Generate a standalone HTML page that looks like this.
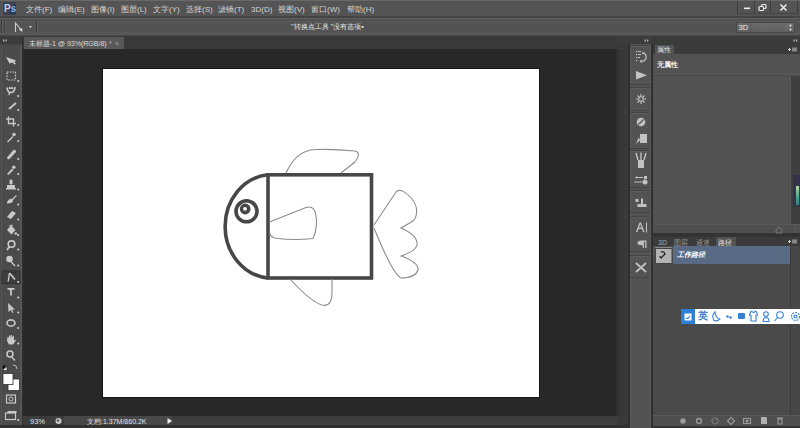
<!DOCTYPE html>
<html><head><meta charset="utf-8">
<style>
*{margin:0;padding:0;box-sizing:border-box}
html,body{width:800px;height:428px;overflow:hidden;background:#535353;font-family:"Liberation Sans",sans-serif;color:#ddd}
.a{position:absolute}
.t{position:absolute;white-space:nowrap;line-height:1}
#menubar{left:0;top:0;width:800px;height:16px;background:#545454;border-top:1px solid #686868}
#optbar{left:0;top:16px;width:800px;height:20px;background:linear-gradient(#444 0,#444 2px,#5e5e5e 2px,#5e5e5e 3px,#535353 3px,#535353 4px,#4e4e4e 4px,#4e4e4e 5px,#5c5c5c 5px,#5c5c5c 6px,#535353 6px,#535353 16px,#585858 16px,#585858 19px,#4a4a4a 19px)}
#topstrip{left:0;top:36px;width:800px;height:8px;background:#3b3b3b}
#tabrow{left:23px;top:37px;width:605px;height:12px;background:#3a3a3a}
#tab{left:24px;top:37px;width:100px;height:12px;background:#585858}
#canvas{left:23px;top:49px;width:594px;height:367px;background:#282828}
#vscroll{left:616px;top:49px;width:12px;height:367px;background:linear-gradient(90deg,#2e2e2e,#363636 30%,#3a3a3a)}
#doc{left:103px;top:69px;width:436px;height:328px;background:#fff;box-shadow:0 0 0 1px #151515}
#toolbar{left:0;top:44px;width:23px;height:384px;background:linear-gradient(90deg,#4b4b4b 0,#4b4b4b 1px,#565656 1px,#565656 2px,#4b4b4b 2px,#4b4b4b 20px,#555 20px,#555 22px,#303030 22px)}
#status{left:23px;top:416px;width:605px;height:12px;background:#3a3a3a;border-top:1px solid #333}
#iconcol{left:628px;top:44px;width:24px;height:384px;background:#535353;border-left:1px solid #3a3a3a;border-right:1px solid #333}
#panel{left:653px;top:44px;width:147px;height:384px;background:#4a4a4a}
.menu .t{top:4.5px;font-size:8px;color:#d4d4d4}
</style></head><body>
<div id="menubar" class="a menu">
  <div class="a" style="left:3px;top:1px;width:13px;height:13px;background:#3a4252"></div>
  <div class="a" style="left:10px;top:4px;width:6px;height:9px;background:#24395a"></div>
  <div class="t" style="left:4px;top:2.5px;color:#c4cde6;font-weight:bold;font-size:10px;letter-spacing:-0.3px">P<span style="color:#8cb6ea">s</span></div>
  <svg class="a" style="left:730px;top:0" width="70" height="17" viewBox="730 0 70 17">
    <g fill="#3c3c3c"><rect x="737" y="0" width="1" height="13"/><rect x="754" y="0" width="1" height="13"/><rect x="770" y="0" width="1" height="13"/><rect x="797" y="0" width="1" height="13"/></g>
    <g fill="#565656"><rect x="738" y="0" width="1" height="13"/><rect x="755" y="0" width="1" height="13"/><rect x="771" y="0" width="1" height="13"/></g>
    <rect x="738" y="12" width="60" height="1" fill="#444"/>
    <rect x="744" y="6.5" width="6" height="1.6" fill="#f0f0f0"/>
    <rect x="761.5" y="3.5" width="4.5" height="4" rx="1" fill="none" stroke="#eee" stroke-width="1.2"/>
    <rect x="759" y="5.5" width="4.5" height="4" rx="1" fill="#4b4b4b" stroke="#eee" stroke-width="1.2"/>
    <path d="M780.5,3.5 L786.5,9.5 M786.5,3.5 L780.5,9.5" stroke="#f0f0f0" stroke-width="1.5"/>
  </svg>
  <span class="t" style="left:26px">文件(F)</span>
  <span class="t" style="left:58px">编辑(E)</span>
  <span class="t" style="left:91px">图像(I)</span>
  <span class="t" style="left:121px">图层(L)</span>
  <span class="t" style="left:153px">文字(Y)</span>
  <span class="t" style="left:186px">选择(S)</span>
  <span class="t" style="left:218px">滤镜(T)</span>
  <span class="t" style="left:251px">3D(D)</span>
  <span class="t" style="left:278px">视图(V)</span>
  <span class="t" style="left:311px">窗口(W)</span>
  <span class="t" style="left:347px">帮助(H)</span>
</div>
<div id="optbar" class="a"></div>
<svg class="a" style="left:0;top:17px" width="800" height="19" viewBox="0 17 800 19">
  <g fill="#3e3e3e"><rect x="1" y="20" width="1" height="13"/><rect x="4" y="20" width="1" height="13"/><rect x="36" y="20" width="1" height="13"/></g>
  <g fill="#5e5e5e"><rect x="2" y="20" width="1" height="13"/><rect x="5" y="20" width="1" height="13"/><rect x="37" y="20" width="1" height="13"/></g>
  <path d="M15.5,32 L15.5,23 L21.5,30.5" fill="none" stroke="#cfcfcf" stroke-width="1.1"/><path d="M19,29.5 L22.5,32 L22,28 Z" fill="#ddd"/>
  <path d="M29,26 L32,26 L30.5,28 Z" fill="#ddd"/>
  <defs><linearGradient id="dd" x1="0" y1="0" x2="0" y2="1"><stop offset="0" stop-color="#6c6c6c"/><stop offset="1" stop-color="#606060"/></linearGradient></defs><rect x="736.5" y="22.5" width="58" height="10" fill="url(#dd)" stroke="#474747" stroke-width="1"/><rect x="750" y="23" width="1" height="9" fill="#575757"/>
  <path d="M785,28 L789,24 M785,31 L790,26" stroke="#888" stroke-width=".8" stroke-dasharray="1 .6"/><circle cx="790.5" cy="25.5" r="1" fill="#eee"/><circle cx="790.5" cy="29.5" r="1" fill="#eee"/>
</svg>
<span class="t" style="left:738.5px;top:24px;font-size:7.5px;color:#e8e8e8">3D</span>
<span class="t" style="left:291px;top:23px;font-size:7.3px;color:#e6e6e6">"转换点工具 "没有选项•</span>
<div id="topstrip" class="a"></div>
<div id="tabrow" class="a"></div>
<div id="tab" class="a"></div>
<span class="t" style="left:29px;top:40px;font-size:7.2px;color:#d8d8d8;letter-spacing:-0.1px">未标题-1 @ 93%(RGB/8)</span><span class="t" style="left:109px;top:40px;font-size:7px;color:#bbb">*</span><span class="t" style="left:115px;top:40px;font-size:7px;color:#aaa">×</span>
<div id="canvas" class="a"></div>
<div id="vscroll" class="a"></div>
<div id="doc" class="a"></div>
<div id="toolbar" class="a"></div>
<svg class="a" style="left:0;top:36px" width="23" height="392" viewBox="0 36 23 392">
  <rect x="0" y="36" width="23" height="8" fill="#3c3c3c"/>
  <rect x="0" y="44" width="22" height="1" fill="#454545"/>
  <g fill="#bdbdbd"><rect x="3" y="39.5" width="1.3" height="2"/><rect x="5.5" y="39.5" width="1.3" height="2"/></g>
  <rect x="2" y="271" width="18" height="12.5" fill="#3e3e3e" stroke="#2e2e2e" stroke-width="1"/>
  <g fill="#c9c9c9" stroke="none">
    <!-- move -->
    <path d="M6,57 L16,60.5 L14.5,62 L16,64 L14.5,64.5 L12.5,62.5 L9.5,63.5 Z"/>
    <!-- small triangles -->
    <g fill="#d8d8d8"><circle cx="18.2" cy="81.0" r="1"/><circle cx="18.2" cy="96.0" r="1"/><circle cx="18.2" cy="110.0" r="1"/><circle cx="18.2" cy="125.0" r="1"/><circle cx="18.2" cy="141.0" r="1"/><circle cx="18.2" cy="159.0" r="1"/><circle cx="18.2" cy="174.0" r="1"/><circle cx="18.2" cy="189.5" r="1"/><circle cx="18.2" cy="204.5" r="1"/><circle cx="18.2" cy="219.5" r="1"/><circle cx="18.2" cy="235.0" r="1"/><circle cx="18.2" cy="249.5" r="1"/><circle cx="18.2" cy="265.5" r="1"/><circle cx="18.2" cy="282.0" r="1"/><circle cx="18.2" cy="297.5" r="1"/><circle cx="18.2" cy="312.5" r="1"/><circle cx="18.2" cy="328.0" r="1"/><circle cx="18.2" cy="343.5" r="1"/><circle cx="18.2" cy="420.0" r="1"/></g>
    <!-- eyedropper -->
    <path d="M7,141.5 L12.5,136 L13.5,137 L8,142.5 Z"/><circle cx="14" cy="134.5" r="1.8"/>
    <!-- healing -->
    <path d="M7,157.5 L13.5,150 Q16,149 16,152 L9.5,159 Q7,160 7,157.5 Z"/>
    <!-- brush -->
    <path d="M7,174 L12,168.5 L13.5,170 L8.5,175 Z"/><circle cx="13.8" cy="167.3" r="1.7"/>
    <!-- stamp -->
    <rect x="9.5" y="179.5" width="3" height="5" rx="1.3"/><rect x="7" y="185" width="8" height="3"/><rect x="6" y="188" width="10" height="1.5"/>
    <!-- history brush -->
    <path d="M7,202.5 Q9,198 12,199 L16,195 L16.8,195.8 L13,200 Q13.5,203.5 7,203.5 Z"/>
    <!-- eraser -->
    <path d="M7,217 L12,211 L16,213 L11,219 Z"/>
    <!-- bucket -->
    <path d="M7,230 L11,225.5 L15.5,230 L11.5,234.5 Z"/><path d="M9,226.5 Q11,223.5 13,226" fill="none" stroke="#c9c9c9" stroke-width="1"/><circle cx="15.8" cy="233.5" r="1.3"/>
    <!-- blur drop -->
    <circle cx="11.5" cy="244" r="3.3" fill="none" stroke="#c9c9c9" stroke-width="1.6"/><path d="M9.5,246.5 L7,250" stroke="#c9c9c9" stroke-width="1.8"/>
    <!-- dodge -->
    <circle cx="9.5" cy="259" r="3.3"/><path d="M11.5,261 L15.5,265.5 L14.5,266.5 L10.5,262 Z"/>
    <!-- pen / convert -->
    <path d="M9.5,273 L8.2,281.5" fill="none" stroke="#d0d0d0" stroke-width="1.3"/><path d="M9.5,273 L15,279.5" fill="none" stroke="#d0d0d0" stroke-width="1.5"/><path d="M11,272.5 L16,272.5 L16,277" fill="none" stroke="#222" stroke-width="1" stroke-dasharray="1 1"/>
    <!-- type -->
    <path d="M7.5,288 L14.5,288 L14.5,289.8 L11.9,289.8 L11.9,295.5 L10.1,295.5 L10.1,289.8 L7.5,289.8 Z"/>
    <!-- path select -->
    <path d="M8,303 L15,309.5 L12,309.5 L13.5,312.5 L12.3,313 L10.8,310 L8.5,312 Z"/>
    <!-- ellipse -->
    <ellipse cx="11" cy="323" rx="4" ry="3.1" fill="none" stroke="#c9c9c9" stroke-width="1.6"/>
    <!-- hand -->
    <path d="M7,341 L7.5,337 L8.5,337 L9,339 L9,335.5 L10.2,335.5 L10.5,338.5 L11,335 L12.2,335 L12.3,338.5 L13,336 L14,336.3 L14,341 L15.5,339.5 L16,340.5 L13,344.5 L9,344.5 Z"/>
    <!-- zoom -->
    <circle cx="10" cy="354" r="3" fill="none" stroke="#c9c9c9" stroke-width="1.6"/><path d="M12,356.5 L15.5,360 L14.5,361 L11,357.5 Z"/>
    <!-- default colors -->
    <rect x="3.5" y="367" width="3.5" height="3.5" fill="#eee" stroke="#222" stroke-width=".6"/><rect x="2.5" y="365.5" width="3" height="3" fill="#111"/>
    <path d="M13,365 Q17,365 17,369" fill="none" stroke="#bbb" stroke-width="1"/>
    <!-- fg bg -->
    <rect x="8" y="379" width="11.5" height="11.5" fill="#fff" stroke="#333" stroke-width=".8"/>
    <rect x="3" y="373.5" width="10" height="11" fill="#fff" stroke="#333" stroke-width=".8"/>
    <!-- quick mask -->
    <rect x="6.5" y="395" width="9" height="8" fill="none" stroke="#c9c9c9" stroke-width="1.2"/><circle cx="11" cy="399" r="2" fill="none" stroke="#c9c9c9" stroke-width="1"/>
    <!-- screen mode -->
    <rect x="5.5" y="413" width="10" height="6.5" fill="none" stroke="#c9c9c9" stroke-width="1.2"/><rect x="7.5" y="411" width="9" height="2" fill="#c9c9c9"/>
  </g>
  <g fill="none" stroke="#c9c9c9" stroke-width="1.2">
    <!-- marquee -->
    <rect x="7" y="72" width="8.5" height="8" stroke-dasharray="1.6 1.2"/>
    <!-- lasso -->
    <path d="M7,87.5 Q7.5,92.5 11,92.5 Q14.5,92.5 15,87 M9,87.5 Q11,89 13,87.5" stroke-width="1.7"/><path d="M9.5,92.5 L9,95" stroke-width="1.4"/>
    <!-- quick select -->
    <path d="M9,109 L16,103" stroke-width="1.8"/>
    <!-- crop -->
    <path d="M8.5,116.5 L8.5,123.5 L16,123.5 M6,119 L13.5,119 L13.5,126.5" stroke-width="1.4"/>
  </g>
  <rect x="22" y="36" width="1" height="8" fill="#303030"/>
</svg>
<div id="status" class="a"></div>
<div class="a" style="left:23px;top:416px;width:28px;height:10px;background:#3d3d3d"></div>
<div class="a" style="left:51px;top:416px;width:121px;height:10px;background:#484848"></div>
<div class="a" style="left:51px;top:416px;width:13px;height:10px;background:#3f3f3f"></div>
<div class="a" style="left:172px;top:416px;width:445px;height:10px;background:linear-gradient(#3c3c3c,#434343)"></div>
<div class="a" style="left:617px;top:416px;width:11px;height:10px;background:#3a3a3a"></div>
<div class="a" style="left:0;top:425px;width:628px;height:3px;background:#303030"></div>
<span class="t" style="left:30px;top:418px;font-size:7.5px;color:#e0e0e0">93%</span>
<svg class="a" style="left:54px;top:416px" width="10" height="10"><circle cx="4.5" cy="5" r="3" fill="#ccc"/><circle cx="4" cy="4.5" r="1.2" fill="#555"/></svg>
<span class="t" style="left:87px;top:418px;font-size:7px;color:#e0e0e0">文档:1.37M/860.2K</span>
<svg class="a" style="left:165px;top:416px" width="10" height="10"><path d="M2.5,2 L7,5 L2.5,8 Z" fill="#eee"/></svg>
<div id="iconcol" class="a"></div>
<svg class="a" style="left:617px;top:36px" width="36" height="392" viewBox="617 36 36 392">
  <rect x="617" y="36" width="36" height="8" fill="#3c3c3c"/>
  <g fill="#bdbdbd"><rect x="644.5" y="39.5" width="1.3" height="2"/><rect x="647" y="39.5" width="1.3" height="2"/></g>
  <rect x="628" y="44" width="2" height="384" fill="#2e2e2e"/>
  <rect x="651" y="44" width="2" height="384" fill="#303030"/><rect x="630" y="44" width="1" height="384" fill="#5a5a5a"/><rect x="650" y="44" width="1" height="384" fill="#5a5a5a"/>
  <g fill="none" stroke="#444" stroke-width="1">
    <path d="M630,45.5 H650 M630,84.5 H650 M630,87.5 H650 M630,110.5 H650 M630,112.5 H650 M630,148.5 H650 M630,150.5 H650 M630,187.5 H650 M630,190.5 H650 M630,212.5 H650 M630,216.5 H650 M630,251.5 H650 M630,255.5 H650 M630,277.5 H650"/>
  </g>
  <g fill="none" stroke="#5c5c5c" stroke-width="1">
    <path d="M631,46.5 H649 M631,88.5 H649 M631,113.5 H649 M631,151.5 H649 M631,191.5 H649 M631,217.5 H649 M631,256.5 H649"/>
  </g>
  <g fill="#c2c2c2">
    <!-- history -->
    <rect x="636" y="51" width="1.2" height="1.2"/><rect x="636" y="54" width="1.2" height="1.2"/><rect x="636" y="57" width="1.2" height="1.2"/><rect x="636" y="60" width="1.2" height="1.2"/>
    <rect x="638" y="51" width="3" height="1"/><rect x="638" y="54" width="3" height="1"/><rect x="638" y="57" width="2" height="1"/>
    <path d="M642,53 Q646.5,53 646,57.5 Q645.5,61.5 641.5,61" fill="none" stroke="#c2c2c2" stroke-width="1.3"/>
    <path d="M641,59.5 L642.5,62.8 L639.5,62 Z"/>
    <!-- play -->
    <path d="M636,71 L647,75.3 L636,79.5 Z"/>
    <!-- sun -->
    <g stroke="#c2c2c2" stroke-width="1.2"><path d="M641,94 V104 M636,99 H646 M637.5,95.5 L644.5,102.5 M644.5,95.5 L637.5,102.5"/></g>
    <circle cx="641" cy="99" r="2.2" fill="#535353" stroke="#c2c2c2" stroke-width="1"/>
    <!-- swatches circle -->
    <circle cx="641" cy="122" r="4.3"/><path d="M638.5,124.5 L643.5,119.5" stroke="#535353" stroke-width="1.3"/>
    <!-- styles -->
    <rect x="640" y="134" width="7" height="9"/><path d="M636,144 L638.5,137.5 L640.5,140 Z" fill="#bbb"/>
    <!-- brush presets -->
    <rect x="638" y="160" width="6" height="8"/><path d="M638,160 L636,153 M641,160 L641,152.5 M644,160 L646,153" stroke="#c2c2c2" stroke-width="1.4"/>
    <!-- clone source -->
    <path d="M636,177.5 H643 M634.5,182 H642" stroke="#c2c2c2" stroke-width="1.2"/><circle cx="645" cy="182" r="2.5"/><path d="M637,176 L635,177.5 L637,179 Z"/><rect x="644" y="176" width="3" height="3"/>
    <!-- tool presets -->
    <rect x="635.5" y="199" width="3" height="3"/><rect x="641" y="198.5" width="2" height="6"/><rect x="637.5" y="204" width="9" height="3"/>
    <!-- character -->
    <path d="M636,232 L639.5,222.5 L641,222.5 L644.5,232 L643,232 L642,229 L638.5,229 L637.5,232 Z M639,227.5 L641.5,227.5 L640.3,224 Z"/><rect x="646" y="222.5" width="1" height="10"/>
    <!-- paragraph -->
    <path d="M641.5,240.5 H646.5 V248 H645.2 V241.8 H644 V248 H642.8 V245.2 Q637.5,245.5 637.5,243 Q637.5,240.5 641.5,240.5 Z"/>
    <!-- tools/scissors -->
    <path d="M636,263 L646,272 M646,263 L636,272" stroke="#c2c2c2" stroke-width="1.8"/>
  </g>
</svg>
<div id="panel" class="a">
  <div class="a" style="left:0;top:0;width:147px;height:10px;background:#3b3b3b"></div>
  <div class="a" style="left:2px;top:1px;width:19px;height:9px;background:#535353"></div>
  <span class="t" style="left:4px;top:2px;font-size:7px;color:#e0e0e0">属性</span>
  <div class="a" style="left:0;top:10px;width:147px;height:21px;background:#535353;border-bottom:1px solid #5e5e5e"></div><div class="a" style="left:0;top:31px;width:147px;height:1px;background:#474747"></div>
  <span class="t" style="left:4px;top:17px;font-size:7.3px;color:#f0f0f0;font-weight:bold">无属性</span>
  <div class="a" style="left:0;top:32px;width:138px;height:148px;background:#535353"></div>
  <div class="a" style="left:137px;top:32px;width:10px;height:148px;background:#3f3f3f;border-left:1px solid #5a5a5a"></div>
  <div class="a" style="left:0;top:180px;width:147px;height:9px;background:#4f4f4f;border-top:1px solid #585858"></div>
  <div class="a" style="left:0;top:189px;width:147px;height:4px;background:#333"></div>
  <div class="a" style="left:0;top:193px;width:147px;height:9px;background:#3b3b3b"></div>
  <span class="t" style="left:5px;top:195px;font-size:7px;color:#aaa">3D</span>
  <span class="t" style="left:21px;top:195px;font-size:7px;color:#999">图层</span>
  <span class="t" style="left:43px;top:195px;font-size:7px;color:#999">通道</span>
  <div class="a" style="left:63px;top:193px;width:20px;height:9px;background:#535353"></div>
  <span class="t" style="left:65px;top:195px;font-size:7px;color:#e8e8e8">路径</span>
  <div class="a" style="left:20px;top:202px;width:117px;height:18px;background:#586a84"></div><div class="a" style="left:0;top:202px;width:20px;height:18px;background:#4e4e4e"></div>
  <div class="a" style="left:2px;top:203px;width:17px;height:16px;background:#cfcfcf;border:1px solid #888"></div>
  <span class="t" style="left:24px;top:207px;font-size:7px;color:#fff;font-style:italic;font-weight:bold">工作路径</span>
  <div class="a" style="left:137px;top:202px;width:10px;height:169px;background:#474747;border-left:1px solid #3a3a3a"></div>
  <div class="a" style="left:0;top:371px;width:147px;height:11px;background:#4f4f4f;border-top:1px solid #5a5a5a"></div>
  <div class="a" style="left:0;top:382px;width:147px;height:2px;background:#333"></div>
</div>
<svg class="a" style="left:653px;top:36px" width="147" height="392" viewBox="653 36 147 392">
  <g fill="#bdbdbd"><rect x="793.5" y="39.5" width="1.3" height="2"/><rect x="796" y="39.5" width="1.3" height="2"/></g>
  <!-- panel menu icons -->
  <g fill="#d0d0d0"><path d="M788,49.5 h3 M789.5,48 v3" stroke="#d0d0d0" stroke-width="1"/><rect x="792" y="47.5" width="5" height="4" fill="#888"/></g>
  <g fill="#d0d0d0"><path d="M788,241.5 h3 M789.5,240 v3" stroke="#d0d0d0" stroke-width="1"/><rect x="792" y="239.5" width="5" height="4" fill="#888"/></g>
  <!-- colored element -->
  <rect x="793" y="175" width="7" height="32" fill="#33334a"/><defs><linearGradient id="gb" x1="0" y1="0" x2="0" y2="1"><stop offset="0" stop-color="#b8d8a8"/><stop offset=".5" stop-color="#5aa890"/><stop offset="1" stop-color="#2f7f80"/></linearGradient></defs>
  <rect x="796" y="186" width="3" height="19" fill="url(#gb)"/>
  
  <!-- properties bottom -->
  <path d="M776,230 L779,227 L782,230 V233 H776 Z" fill="none" stroke="#777" stroke-width="1"/>
  <rect x="795" y="224" width="1" height="9" fill="#5a5a5a"/>
  <!-- path thumbnail -->
  <rect x="655.5" y="248.5" width="16.5" height="15" fill="#b2b2b2" stroke="#444"/>
  <path d="M661,252 Q664,251 665,254 L662,257 Q660,258 660,256" fill="none" stroke="#222" stroke-width="1.3"/>
  <rect x="660.5" y="257" width="1.5" height="1.5" fill="#222"/>
  <!-- bottom bar icons -->
  <g fill="#9a9a9a" stroke="#9a9a9a">
    <circle cx="683" cy="421" r="2.8" stroke="none"/>
    <circle cx="699" cy="421" r="2.5" fill="none" stroke-width="1.3"/>
    <circle cx="715" cy="421" r="3" fill="none" stroke-width="1.1" stroke-dasharray="1 .8"/>
    <path d="M731,417.5 L734.5,421 L731,424.5 L727.5,421 Z" fill="none" stroke-width="1.1"/>
    <rect x="743.5" y="418.5" width="7" height="5" fill="none" stroke-width="1.1"/><circle cx="747" cy="421" r="1.5" stroke="none"/>
    <path d="M761,417 h5 l1,1 v6 h-6 z" stroke="none" fill="#b0b0b0"/>
    <path d="M777,418 h6 M778,419 h4 v5 h-4 z" fill="none" stroke-width="1.1"/>
  </g>
</svg>
<!-- IME bar -->
<div class="a" style="left:681px;top:309px;width:119px;height:15px;background:#fff"></div>
<div class="a" style="left:681px;top:309px;width:14px;height:15px;background:#2f7ed8"></div>
<svg class="a" style="left:681px;top:309px" width="119" height="15" viewBox="681 309 119 15">
  <path d="M684.5,313.5 h7 v7 h-7 z" fill="#fff"/><path d="M686,318 Q688,319.5 690,316" fill="none" stroke="#2f7ed8" stroke-width="1.2"/>
  <g fill="none" stroke="#3a80d2" stroke-width="1.1">
    <path d="M715,311.8 Q711,316 714,320.3 Q717,322 719.8,319 Q715.5,318 715,311.8 Z"/>
    <circle cx="727.5" cy="316.5" r=".7" fill="#3a80d2"/><circle cx="730.5" cy="317.5" r=".7" fill="#3a80d2"/>
    <path d="M750.5,312 L752,311.3 Q752.8,312.8 753.5,312.8 Q754.3,312.8 755,311.3 L756.5,312 L757.5,315 L756,315.3 V321 H751 V315.3 L749.5,315 Z"/>
    <circle cx="766" cy="314" r="2.3"/><path d="M763,321.5 Q763,317.5 766,317.5 Q769,317.5 769,321.5 Z"/>
    <circle cx="780" cy="315" r="3.3"/><path d="M777.5,317.5 L774.5,321"/>
    <circle cx="795.5" cy="316.5" r="4" stroke-dasharray="2 1"/><circle cx="795.5" cy="316.5" r="1.5"/>
  </g>
  <rect x="738" y="313" width="7" height="6" rx="1" fill="#3a80d2"/>
</svg>
<span class="t" style="left:698px;top:311px;font-size:9.5px;color:#3a80d2;font-weight:bold">英</span>
<svg class="a" style="left:0;top:0" width="800" height="428" viewBox="0 0 800 428">
  <g fill="none" stroke="#474747" stroke-width="3.6">
    <rect x="268" y="174.8" width="103.5" height="103.2"/>
    <path d="M268,174.8 A47,51.8 0 0 0 268,278"/>
    <circle cx="246.5" cy="211.3" r="10.5"/>
  </g>
  <circle cx="245.2" cy="209" r="5.4" fill="#474747"/>
  <circle cx="245" cy="208.8" r="1.9" fill="#fff"/>
  <g fill="none" stroke="#8c8c8c" stroke-width="1.1">
    <path d="M286,173 C292,160 300,150 316,149.5 C330,149 345,150 355,151 C360,152 359,157 355,162 L341,173"/>
    <path d="M269.5,222 L306,207.5 C311,206 314,208 315.5,213 C317,220 317,230 313,238.5 C300,240 285,239.5 275,238 C271,237 270,235 270,233"/>
    <path d="M290,279 C300,290 312,302 322,305 C330,307 332,300 332,292 L332,279"/>
    <path d="M374,225 L396,192 C400,188 406,192 412,199 C418,206 418,216 413,221 L401,228 C410,232 418,238 417,245 C416,250 410,253 401,256 C412,260 419,264 418,270 C416,276 410,278 401,278 C395,275 385,255 374,228"/>
  </g>
</svg>
</body></html>
